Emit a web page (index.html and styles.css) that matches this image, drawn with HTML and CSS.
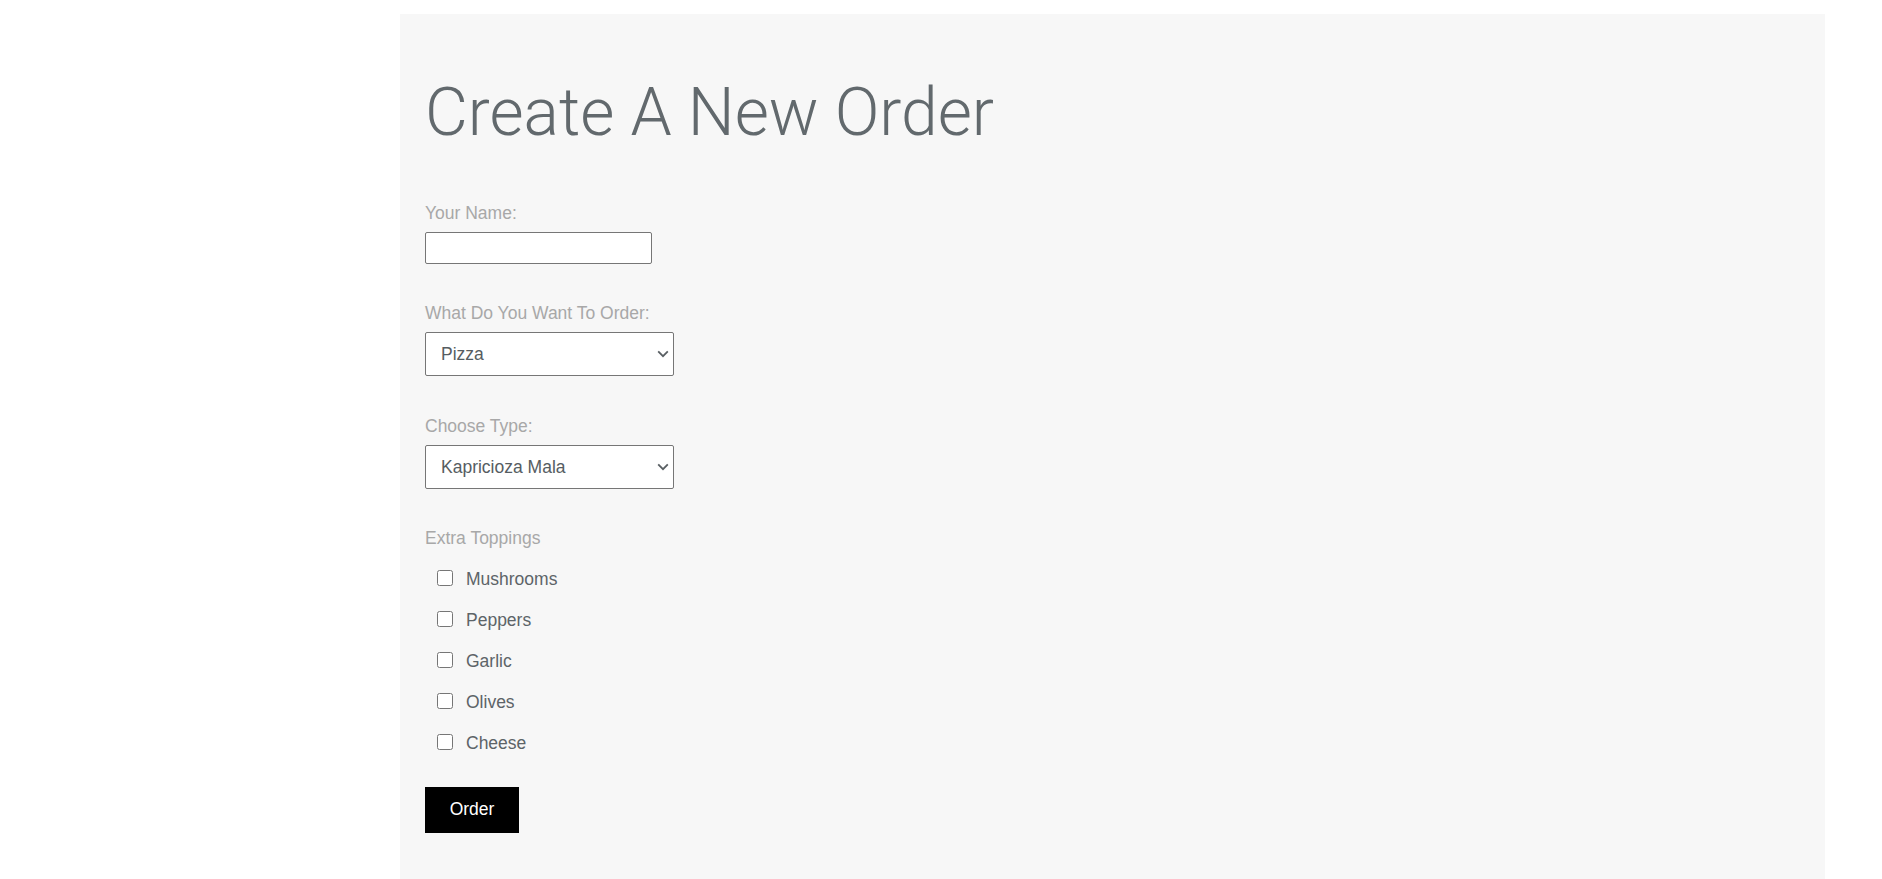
FILE: index.html
```html
<!DOCTYPE html>
<html lang="en">
<head>
<meta charset="utf-8">
<title>Create A New Order</title>
<link rel="stylesheet" href="styles.css">
</head>
<body>
<main class="panel">
  <h1 class="title">Create A New Order</h1>
  <form class="order-form">
    <div class="field">
      <label class="field-label" for="name">Your Name:</label>
      <input class="text-input" id="name" type="text">
    </div>
    <div class="field">
      <label class="field-label" for="what">What Do You Want To Order:</label>
      <div class="select-wrap">
        <select class="select" id="what">
          <option>Pizza</option>
        </select>
        <svg class="chevron" width="12" height="8" viewBox="0 0 12 8" aria-hidden="true"><path d="M1.2 1.4 L6 6.2 L10.8 1.4" fill="none" stroke="#595f63" stroke-width="1.8"/></svg>
      </div>
    </div>
    <div class="field">
      <label class="field-label" for="type">Choose Type:</label>
      <div class="select-wrap">
        <select class="select" id="type">
          <option>Kapricioza Mala</option>
        </select>
        <svg class="chevron" width="12" height="8" viewBox="0 0 12 8" aria-hidden="true"><path d="M1.2 1.4 L6 6.2 L10.8 1.4" fill="none" stroke="#595f63" stroke-width="1.8"/></svg>
      </div>
    </div>
    <div class="field">
      <div class="field-label">Extra Toppings</div>
      <div class="toppings">
        <label class="topping"><input type="checkbox" class="check"><span>Mushrooms</span></label>
        <label class="topping"><input type="checkbox" class="check"><span>Peppers</span></label>
        <label class="topping"><input type="checkbox" class="check"><span>Garlic</span></label>
        <label class="topping"><input type="checkbox" class="check"><span>Olives</span></label>
        <label class="topping"><input type="checkbox" class="check"><span>Cheese</span></label>
      </div>
    </div>
    <button type="button" class="order-btn">Order</button>
  </form>
</main>
</body>
</html>
```
FILE: styles.css
```css
html, body {
  margin: 0;
  padding: 0;
  background: #ffffff;
  overflow: hidden;
}

body {
  font-family: "Liberation Sans", Arial, sans-serif;
  font-size: 17.5px;
}

.panel {
  box-sizing: border-box;
  margin: 14px 0 0 400px;
  width: 1425px;
  min-height: calc(100vh - 14px);
  background: #f7f7f7;
  padding: 59px 25px 40px 25px;
}

.title {
  margin: 0;
  font-family: Roboto, "Liberation Sans", sans-serif;
  font-weight: 300;
  font-size: 66px;
  line-height: 1.2;
  color: #62696d;
}

.order-form {
  display: flex;
  flex-direction: column;
  align-items: flex-start;
  margin-top: 50.4px;
}

.field {
  display: flex;
  flex-direction: column;
  align-items: flex-start;
  margin-bottom: 39.5px;
}

.field-label {
  display: block;
  color: #a8a8a8;
  line-height: 21px;
  margin-bottom: 8px;
}

.text-input {
  box-sizing: border-box;
  width: 227px;
  height: 32px;
  margin: 0;
  border: 1px solid #767676;
  border-radius: 2px;
  background: #ffffff;
  font: inherit;
  padding: 0 6px;
}

.select-wrap {
  position: relative;
  width: 249px;
  height: 44px;
}

.select {
  box-sizing: border-box;
  display: block;
  width: 249px;
  height: 44px;
  margin: 0;
  border: 1px solid #767676;
  border-radius: 2px;
  background-color: #ffffff;
  font-family: "Liberation Sans", Arial, sans-serif;
  font-size: 17.5px;
  color: #565d62;
  padding: 0 28px 0 15px;
  appearance: none;
  -webkit-appearance: none;
}

.chevron {
  position: absolute;
  right: 5px;
  top: 18px;
  pointer-events: none;
}

.toppings {
  display: flex;
  flex-direction: column;
  gap: 20px;
  margin-top: 12px;
  padding-left: 12px;
}

.topping {
  display: flex;
  align-items: flex-start;
  gap: 13px;
  line-height: 21px;
  color: #5d6468;
}

.check {
  width: 16px;
  height: 16px;
  margin: 1px 0 0 0;
}

.order-btn {
  width: 94px;
  height: 46px;
  margin-top: -7px;
  border: none;
  border-radius: 0;
  background: #000000;
  color: #ffffff;
  font-family: "Liberation Sans", Arial, sans-serif;
  font-size: 17.5px;
  padding: 0;
  cursor: pointer;
}
```
